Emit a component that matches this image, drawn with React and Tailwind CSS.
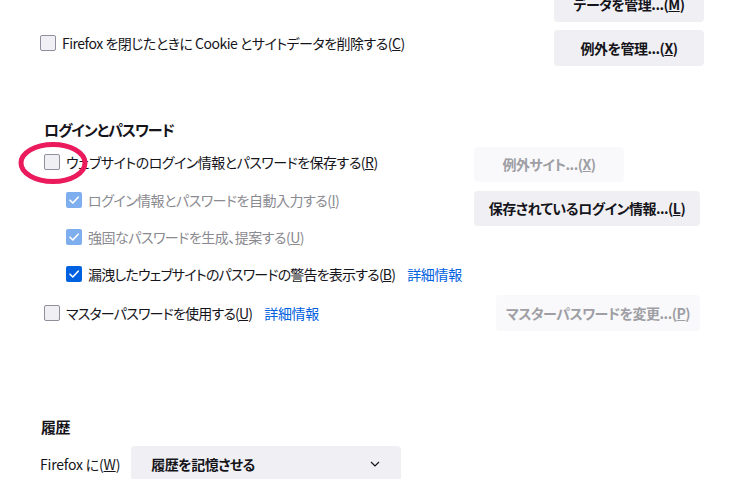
import React from "react";

const Box = ({ checked = false, faded = false }) => {
    if (!checked) {
        return <span className="block w-4 h-4 shrink-0 rounded-[2px] border border-[#8f8f9d] bg-[#f0f0f4]" />;
    }
    return (
        <span className={`flex items-center justify-center w-4 h-4 shrink-0 rounded-[2px] ${faded ? "bg-[#7faeee]" : "bg-[#0061e0]"}`}>
            <svg width="12" height="12" viewBox="0 0 12 12" fill="none">
                <path d="M2 6.2 L4.8 9 L10.2 3.2" stroke="white" strokeWidth="1.6" strokeLinecap="round" strokeLinejoin="round" />
            </svg>
        </span>
    );
};

const Btn = ({ children, disabled = false, className = "" }) => (
    <div
        className={`flex items-center justify-center h-[35px] rounded-[4px] text-[14px] tracking-[-0.5px] whitespace-nowrap font-semibold ${
            disabled ? "bg-[#f9f9fb] text-[#9e9ea4]" : "bg-[#f0f0f4] text-[#15141a]"
        } ${className}`}
    >
        {children}
    </div>
);

const Row = ({ checked, faded, tight, children, className = "" }) => (
    <div className={`flex items-center h-4 ${className}`}>
        <Box checked={checked} faded={faded} />
        <span
            className={`ml-[6px] text-[14px] whitespace-nowrap ${tight ? "tracking-[-0.8px]" : "tracking-[-0.5px]"} ${
                faded ? "text-[#8a8a90]" : "text-[#15141a]"
            }`}
        >
            {children}
        </span>
    </div>
);

const Link = ({ children }) => <span className="ml-[12px] tracking-[-0.3px] text-[#0061e0]">{children}</span>;

export default function App() {
    return (
        <div
            className="relative w-[735px] h-[479px] overflow-hidden bg-white text-[#15141a] [font-feature-settings:'palt']"
            style={{ fontFamily: '"Noto Sans CJK JP", "Noto Sans", sans-serif' }}
        >
            {/* cookies */}
            <div className="flex justify-between pl-[40px] pr-[31px]">
                <div className="pt-[35px]">
                    <Row>
                        Firefox を閉じたときに Cookie とサイトデータを削除する(<u>C</u>)
                    </Row>
                </div>
                <div className="flex flex-col gap-2 mt-[-14px]">
                    <Btn className="w-[150px] h-[36px]">
                        データを管理...(<u>M</u>)
                    </Btn>
                    <Btn className="w-[150px] h-[36px]">
                        例外を管理...(<u>X</u>)
                    </Btn>
                </div>
            </div>

            {/* logins */}
            <h2 className="mt-[54px] ml-[44px] h-5 leading-5 text-[15px] tracking-[-1px] font-bold">ログインとパスワード</h2>
            <div className="flex mt-[7px] pl-[44px]">
                <div className="flex flex-col w-[430px]">
                    <Row className="mt-[7px]">
                        ウェブサイトのログイン情報とパスワードを保存する(<u>R</u>)
                    </Row>
                    <div className="pl-[22px]">
                        <Row checked faded className="mt-[22px]">
                            ログイン情報とパスワードを自動入力する(<u>I</u>)
                        </Row>
                        <Row checked faded className="mt-[21px]">
                            強固なパスワードを生成、提案する(<u>U</u>)
                        </Row>
                        <Row checked tight className="mt-[21px]">
                            漏洩したウェブサイトのパスワードの警告を表示する(<u>B</u>)
                            <Link>詳細情報</Link>
                        </Row>
                    </div>
                    <Row tight className="mt-[23px]">
                        マスターパスワードを使用する(<u>U</u>)
                        <Link>詳細情報</Link>
                    </Row>
                </div>
                <div className="flex flex-col w-[226px]">
                    <Btn disabled className="w-[150px]">
                        例外サイト...(<u>X</u>)
                    </Btn>
                    <Btn className="w-[226px] mt-[9px]">
                        保存されているログイン情報...(<u>L</u>)
                    </Btn>
                    <Btn disabled className="w-[204px] h-[36px] mt-[69px] self-end">
                        マスターパスワードを変更...(<u>P</u>)
                    </Btn>
                </div>
            </div>

            {/* history */}
            <h2 className="mt-[86px] ml-[41px] h-5 leading-5 text-[15px] tracking-[-0.5px] font-bold">履歴</h2>
            <div className="flex items-center mt-[9px] pl-[40px]">
                <span className="text-[14px] tracking-[-0.2px] whitespace-nowrap">
                    Firefox に(<u>W</u>)
                </span>
                <div className="flex items-center justify-between ml-[11px] w-[270px] h-[36px] rounded-[4px] bg-[#f0f0f4] pl-[20px] pr-[21px]">
                    <span className="text-[14px] tracking-[-0.5px] font-semibold">履歴を記憶させる</span>
                    <svg width="10" height="6" viewBox="0 0 10 6" fill="none">
                        <path d="M1 1 L5 5 L9 1" stroke="#15141a" strokeWidth="1.2" />
                    </svg>
                </div>
            </div>

            {/* annotation */}
            <svg className="absolute left-0 top-0 pointer-events-none" width="735" height="479">
                <ellipse cx="53" cy="163" rx="32" ry="18.5" fill="none" stroke="#ea1a5d" strokeWidth="5" />
            </svg>
        </div>
    );
}
